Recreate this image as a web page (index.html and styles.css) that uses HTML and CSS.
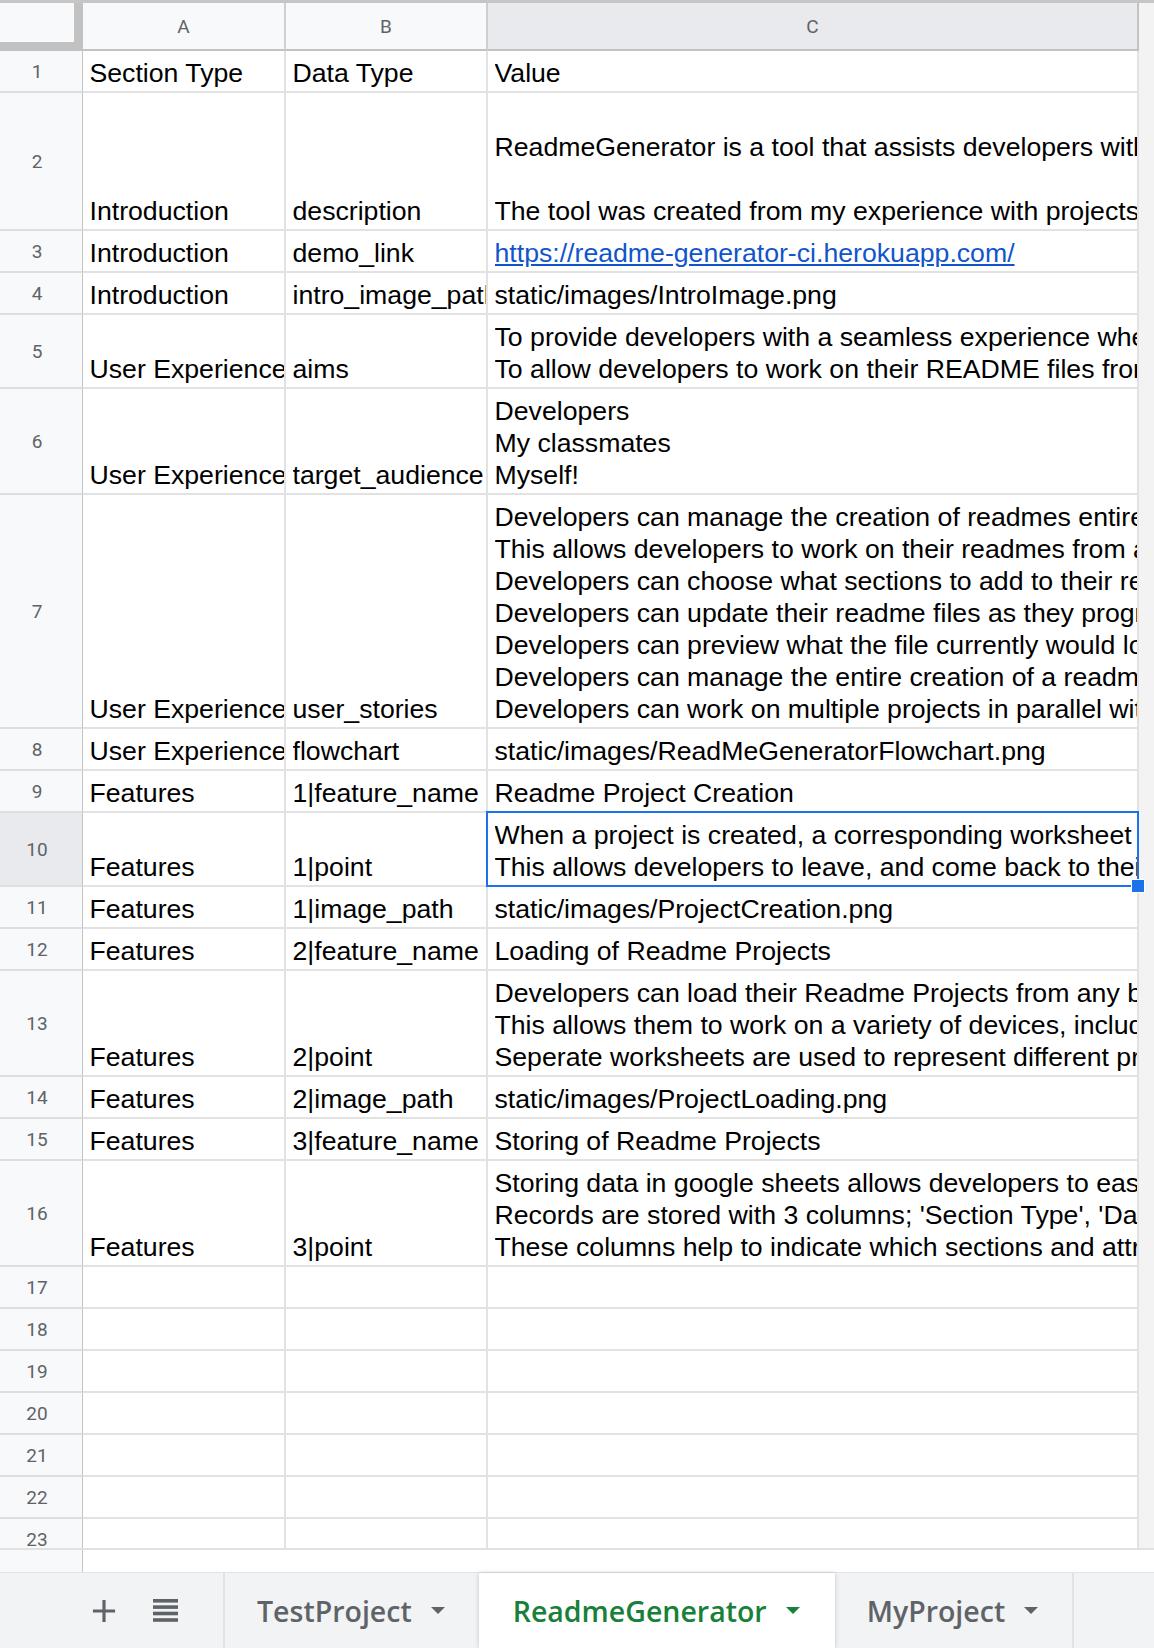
FILE: index.html
```html
<!DOCTYPE html>
<html lang="en">
<head>
<meta charset="utf-8">
<title>ReadmeGenerator - Sheet</title>
<link rel="stylesheet" href="styles.css">
</head>
<body>
<div class="app">
  <div class="topline"></div>
  <div class="main">
    <div class="grid">
      <div class="corner"><div class="corner-in"></div></div>
      <div class="ch">A</div>
      <div class="ch">B</div>
      <div class="ch ch-sel">C</div>
      <div class="sbh"></div>

      <div class="rh">1</div>
      <div class="c"><div class="ln">Section Type</div></div>
      <div class="c"><div class="ln">Data Type</div></div>
      <div class="c"><div class="ln">Value</div></div>
      <div class="sb"></div>

      <div class="rh">2</div>
      <div class="c"><div class="ln">Introduction</div></div>
      <div class="c"><div class="ln">description</div></div>
      <div class="c"><div class="ln"></div><div class="ln">ReadmeGenerator is a tool that assists developers with creating README files for their projects.</div><div class="ln"></div><div class="ln">The tool was created from my experience with projects where README files took a long time to write.</div></div>
      <div class="sb"></div>

      <div class="rh">3</div>
      <div class="c"><div class="ln">Introduction</div></div>
      <div class="c"><div class="ln">demo_link</div></div>
      <div class="c"><div class="ln"><a class="link" href="#">https://readme-generator-ci.herokuapp.com/</a></div></div>
      <div class="sb"></div>

      <div class="rh">4</div>
      <div class="c"><div class="ln">Introduction</div></div>
      <div class="c"><div class="ln">intro_image_path</div></div>
      <div class="c"><div class="ln">static/images/IntroImage.png</div></div>
      <div class="sb"></div>

      <div class="rh">5</div>
      <div class="c"><div class="ln">User Experience</div></div>
      <div class="c"><div class="ln">aims</div></div>
      <div class="c"><div class="ln">To provide developers with a seamless experience when creating README files.</div><div class="ln">To allow developers to work on their README files from anywhere.</div></div>
      <div class="sb"></div>

      <div class="rh">6</div>
      <div class="c"><div class="ln">User Experience</div></div>
      <div class="c"><div class="ln">target_audience</div></div>
      <div class="c"><div class="ln">Developers</div><div class="ln">My classmates</div><div class="ln">Myself!</div></div>
      <div class="sb"></div>

      <div class="rh">7</div>
      <div class="c"><div class="ln">User Experience</div></div>
      <div class="c"><div class="ln">user_stories</div></div>
      <div class="c"><div class="ln">Developers can manage the creation of readmes entirely through a web interface.</div><div class="ln">This allows developers to work on their readmes from any device.</div><div class="ln">Developers can choose what sections to add to their readme.</div><div class="ln">Developers can update their readme files as they progress.</div><div class="ln">Developers can preview what the file currently would look like.</div><div class="ln">Developers can manage the entire creation of a readme.</div><div class="ln">Developers can work on multiple projects in parallel with ease.</div></div>
      <div class="sb"></div>

      <div class="rh">8</div>
      <div class="c"><div class="ln">User Experience</div></div>
      <div class="c"><div class="ln">flowchart</div></div>
      <div class="c"><div class="ln">static/images/ReadMeGeneratorFlowchart.png</div></div>
      <div class="sb"></div>

      <div class="rh">9</div>
      <div class="c"><div class="ln">Features</div></div>
      <div class="c"><div class="ln">1|feature_name</div></div>
      <div class="c"><div class="ln">Readme Project Creation</div></div>
      <div class="sb"></div>

      <div class="rh rh-sel">10</div>
      <div class="c"><div class="ln">Features</div></div>
      <div class="c"><div class="ln">1|point</div></div>
      <div class="c c-active"><div class="ln">When a project is created, a corresponding worksheet is created.</div><div class="ln">This allows developers to leave, and come back to their project later.</div><div class="selbox"><div class="handle"></div></div></div>
      <div class="sb"></div>

      <div class="rh">11</div>
      <div class="c"><div class="ln">Features</div></div>
      <div class="c"><div class="ln">1|image_path</div></div>
      <div class="c"><div class="ln">static/images/ProjectCreation.png</div></div>
      <div class="sb"></div>

      <div class="rh">12</div>
      <div class="c"><div class="ln">Features</div></div>
      <div class="c"><div class="ln">2|feature_name</div></div>
      <div class="c"><div class="ln">Loading of Readme Projects</div></div>
      <div class="sb"></div>

      <div class="rh">13</div>
      <div class="c"><div class="ln">Features</div></div>
      <div class="c"><div class="ln">2|point</div></div>
      <div class="c"><div class="ln">Developers can load their Readme Projects from any browser.</div><div class="ln">This allows them to work on a variety of devices, including mobile.</div><div class="ln">Seperate worksheets are used to represent different projects.</div></div>
      <div class="sb"></div>

      <div class="rh">14</div>
      <div class="c"><div class="ln">Features</div></div>
      <div class="c"><div class="ln">2|image_path</div></div>
      <div class="c"><div class="ln">static/images/ProjectLoading.png</div></div>
      <div class="sb"></div>

      <div class="rh">15</div>
      <div class="c"><div class="ln">Features</div></div>
      <div class="c"><div class="ln">3|feature_name</div></div>
      <div class="c"><div class="ln">Storing of Readme Projects</div></div>
      <div class="sb"></div>

      <div class="rh">16</div>
      <div class="c"><div class="ln">Features</div></div>
      <div class="c"><div class="ln">3|point</div></div>
      <div class="c"><div class="ln">Storing data in google sheets allows developers to easily view their data.</div><div class="ln">Records are stored with 3 columns; 'Section Type', 'Data Type' and 'Value'.</div><div class="ln">These columns help to indicate which sections and attributes are stored.</div></div>
      <div class="sb"></div>

      <div class="rh">17</div><div class="c e"></div><div class="c e"></div><div class="c e"></div><div class="sb"></div>
      <div class="rh">18</div><div class="c e"></div><div class="c e"></div><div class="c e"></div><div class="sb"></div>
      <div class="rh">19</div><div class="c e"></div><div class="c e"></div><div class="c e"></div><div class="sb"></div>
      <div class="rh">20</div><div class="c e"></div><div class="c e"></div><div class="c e"></div><div class="sb"></div>
      <div class="rh">21</div><div class="c e"></div><div class="c e"></div><div class="c e"></div><div class="sb"></div>
      <div class="rh">22</div><div class="c e"></div><div class="c e"></div><div class="c e"></div><div class="sb"></div>
      <div class="rh">23</div><div class="c e"></div><div class="c e"></div><div class="c e"></div><div class="sb"></div>
    </div>
  </div>
  <div class="hscroll">
    <div class="hscroll-stub"></div>
    <div class="hscroll-rest"></div>
  </div>
  <div class="tabbar">
    <div class="tools">
      <svg class="ico" viewBox="0 0 24 24" width="38" height="38"><path d="M19 13h-6v6h-2v-6H5v-2h6V5h2v6h6v2z" fill="#5f6368"/></svg>
      <svg class="ico-list" viewBox="0 0 25 23" width="25" height="23"><rect x="0" y="0" width="25" height="3.6" fill="#5f6368"/><rect x="0" y="6.3" width="25" height="3.6" fill="#5f6368"/><rect x="0" y="12.7" width="25" height="3.6" fill="#5f6368"/><rect x="0" y="19.2" width="25" height="3.6" fill="#5f6368"/></svg>
    </div>
    <div class="tab"><span class="tab-label">TestProject</span><span class="caret"></span></div>
    <div class="tab tab-active"><span class="tab-label">ReadmeGenerator</span><span class="caret"></span></div>
    <div class="tab tab-last"><span class="tab-label">MyProject</span><span class="caret"></span></div>
    <div class="tab-fill"></div>
  </div>
</div>
</body>
</html>
```

FILE: styles.css
```css
* {
  box-sizing: border-box;
  margin: 0;
  padding: 0;
}

html, body {
  width: 1154px;
  height: 1648px;
  overflow: hidden;
  background: #ffffff;
}

body {
  font-family: "Liberation Sans", Arial, sans-serif;
  color: #000000;
}

.app {
  display: flex;
  flex-direction: column;
  height: 1648px;
}

.topline {
  flex: none;
  height: 3px;
  background: #c6c6c6;
}

.main {
  flex: none;
  height: 1547px;
  border-bottom: 2px solid #e1e1e1;
  overflow: hidden;
}

.grid {
  display: grid;
  grid-template-columns: 83px 203px 202px 651px 15px;
}

/* header row */
.corner {
  height: 48px;
  background: #c2c2c2;
}

.corner-in {
  width: 74px;
  height: 39px;
  background: #f8f9fa;
}

.ch {
  height: 48px;
  background: #f8f9fa;
  border-right: 2px solid #cfcfcf;
  border-bottom: 2px solid #c2c2c2;
  display: flex;
  align-items: center;
  justify-content: center;
  font-family: Roboto, "Liberation Sans", Arial, sans-serif;
  font-size: 19px;
  color: #5f6368;
}

.ch-sel {
  background: #e8eaed;
  border-right-color: #c2c2c2;
}

.sbh {
  background: #f3f3f3;
}

/* row headers */
.rh {
  background: #f8f9fa;
  border-right: 1px solid #c4c4c4;
  border-bottom: 2px solid #dedede;
  display: flex;
  align-items: center;
  justify-content: center;
  padding-right: 8px;
  font-family: Roboto, "Liberation Sans", Arial, sans-serif;
  font-size: 19px;
  color: #5f6368;
}

.rh-sel {
  background: #e8eaed;
}

/* cells */
.c {
  min-width: 0;
  border-right: 2px solid #e2e2e2;
  border-bottom: 2px solid #e2e2e2;
  padding: 6px 0 2px 6.5px;
  display: flex;
  flex-direction: column;
  justify-content: flex-end;
  font-size: 26.67px;
  line-height: 32px;
}

.c.e {
  height: 42px;
}

.ln {
  height: 32px;
  white-space: pre;
  overflow: hidden;
}

.link {
  color: #1155cc;
  text-decoration: underline;
}

.sb {
  background: #f3f3f3;
}

/* selected cell */
.c-active {
  position: relative;
}

.selbox {
  position: absolute;
  top: -2px;
  left: -2px;
  right: -2px;
  bottom: -2px;
  border: 2px solid #1a73e8;
  pointer-events: none;
  z-index: 2;
}

.handle {
  position: absolute;
  right: -8px;
  bottom: -8px;
  width: 14px;
  height: 14px;
  background: #1a73e8;
  border: 1.5px solid #ffffff;
}

/* horizontal scroll strip */
.hscroll {
  flex: none;
  height: 22px;
  display: flex;
}

.hscroll-stub {
  width: 83px;
  background: #f8f9fa;
  border-right: 1px solid #c4c4c4;
}

.hscroll-rest {
  flex: 1;
  background: #ffffff;
}

/* tab bar */
.tabbar {
  flex: none;
  height: 76px;
  display: flex;
  background: #f1f3f4;
  border-top: 1px solid #e3e3e3;
  font-family: "Open Sans", Roboto, "Liberation Sans", Arial, sans-serif;
}

.tools {
  width: 225px;
  flex: none;
  display: flex;
  align-items: center;
  padding-left: 85px;
  gap: 30px;
  border-right: 2px solid #e0e2e4;
}

.ico {
  display: block;
}

.ico-list {
  display: block;
}

.tab {
  display: flex;
  align-items: center;
  gap: 19px;
  padding: 0 34px 0 32px;
  font-size: 28.5px;
  font-weight: 600;
  color: #5f6368;
}

.tab-active {
  background: #ffffff;
  color: #188038;
  padding: 0 35px 0 34px;
  box-shadow: 0 0 4px rgba(60, 64, 67, 0.25);
}

.tab-last {
  border-right: 2px solid #e0e2e4;
}

.caret {
  width: 0;
  height: 0;
  border-left: 7.5px solid transparent;
  border-right: 7.5px solid transparent;
  border-top: 7.5px solid #5f6368;
}

.tab-active .caret {
  border-top-color: #188038;
}

.tab-fill {
  flex: 1;
}
```
